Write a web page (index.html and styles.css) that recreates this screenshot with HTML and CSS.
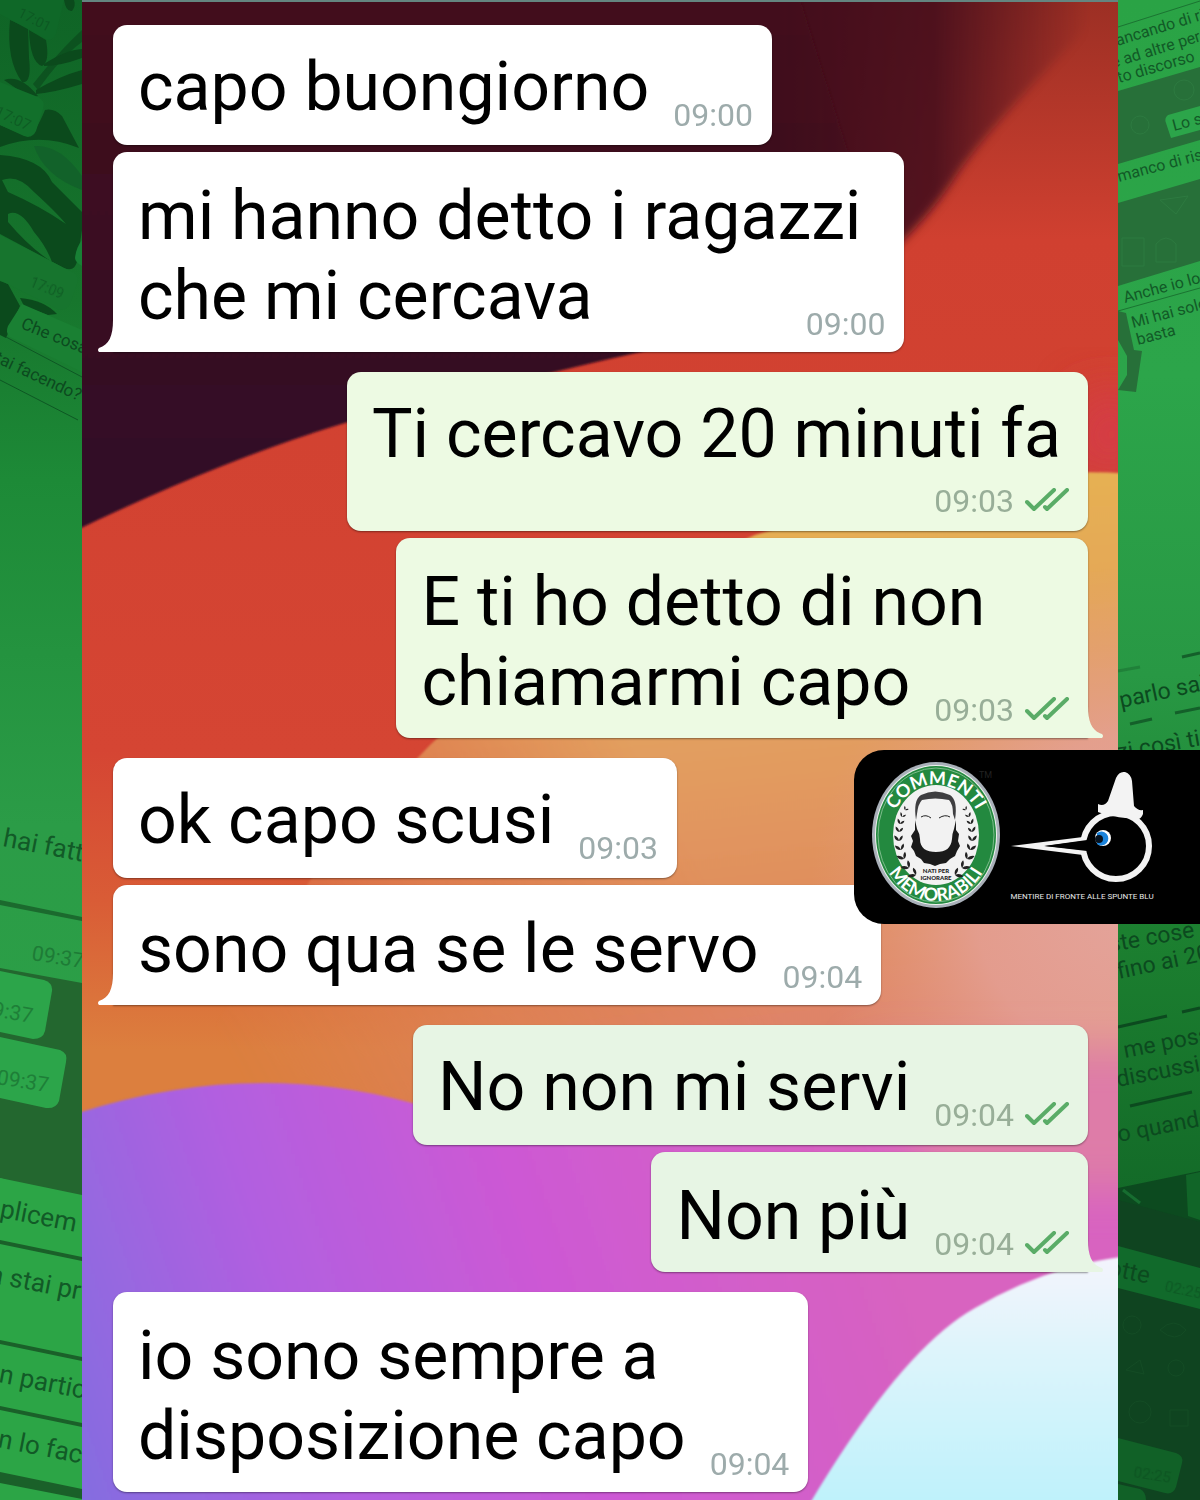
FILE: index.html
```html
<!DOCTYPE html>
<html lang="it">
<head>
  <meta charset="UTF-8">
  <meta name="viewport" content="width=device-width, initial-scale=1.0">
  <title>Commenti Memorabili - capo buongiorno</title>
  <link rel="stylesheet" href="styles.css">
</head>
<body>
  <!-- green collage of old chats -->
  <svg class="collage" viewBox="0 0 1200 1500" preserveAspectRatio="xMidYMin slice" aria-hidden="true">
    <defs>
      <linearGradient id="leftGreen" x1="0" y1="0" x2="0" y2="1">
        <stop offset="0" stop-color="#0f6426"/>
        <stop offset=".2" stop-color="#17762d"/>
        <stop offset=".32" stop-color="#1d8a37"/>
        <stop offset=".55" stop-color="#2b9c47"/>
        <stop offset="1" stop-color="#2ca546"/>
      </linearGradient>
      <linearGradient id="rightGreen" x1="0" y1="0" x2="0" y2="1">
        <stop offset="0" stop-color="#2aa345"/>
        <stop offset=".25" stop-color="#2ca54a"/>
        <stop offset=".45" stop-color="#289844"/>
        <stop offset=".62" stop-color="#1c8030"/>
        <stop offset=".8" stop-color="#136a28"/>
        <stop offset="1" stop-color="#0f5c24"/>
      </linearGradient>
    </defs>
    <rect width="600" height="1500" fill="url(#leftGreen)"/>
    <rect x="600" width="600" height="1500" fill="url(#rightGreen)"/>

    <!-- leaves -->
    <g fill="#0b4a1c">
      <path d="M10 20 Q6 60 22 82 Q32 84 29 58 L28 28Z"/>
      <path d="M29 30 Q30 62 42 66 Q50 62 46 40Z"/>
      <path d="M64 0 Q66 12 72 11 Q76 6 74 0Z"/>
      <path d="M33 84 Q60 50 82 30 V42 Q60 58 38 90Z" opacity=".7"/>
      <path d="M44 64 Q66 50 82 49 V58 Q60 66 44 66Z"/>
      <path d="M36 90 Q60 76 82 70 V84 Q56 92 36 94Z"/>
      <path d="M4 80 Q20 74 38 96 L30 98Z"/>
      <path d="M0 125 L28 137 Q36 132 45 110 Q54 108 62 116 L79 148 Q40 132 0 147Z"/>
      <path fill-rule="evenodd" d="M0 155 Q42 158 52 182 L82 212 V230 L78 256 Q76 276 60 266 L0 234Z M2 180 Q18 174 34 192 Q56 212 66 224 Q40 206 8 192Z M8 214 Q20 208 34 232 Q46 246 52 262 Q30 248 8 222Z"/>
      <path d="M0 281 L8 284 L20 306 L6 338 L0 335Z"/>
      <path d="M20 298 Q44 300 57 314 L48 315 L24 306Z"/>
    </g>
    <path d="M34 146 Q60 144 82 176 V190 Q44 176 34 146Z" fill="#12622a"/>

    <!-- left bubbles -->
    <path d="M0 14 L46 39 Q52 42 56 34 L64 0 H0Z" fill="#0f6828"/>
    <path d="M0 82 L38 97 Q46 101 43 109 L36 131 Q32 139 24 136 L0 125Z" fill="#12702b"/>
    <path d="M0 235 L72 272 Q80 276 77 284 L70 304 Q66 312 57 309 L0 280Z" fill="#17752e"/>
    <path d="M82 240 Q76 248 75 258 Q75 262 82 266Z" fill="#188035"/>
    <path d="M22 304 L82 330 V372 L10 337 Q5 333 8 326Z" fill="#1a8033"/>
    <path d="M6 337 L82 377 M0 380 L78 420" stroke="#0e5724" stroke-width="1" fill="none"/>
    <g class="collage-text deep faded">
      <text transform="translate(17 16) rotate(27)" font-size="14">17:01</text>
      <text transform="translate(-6 115) rotate(25)" font-size="15">17:07</text>
      <text transform="translate(29 286) rotate(22)" font-size="14">17:09</text>
    </g>
    <g class="collage-text deep">
      <text transform="translate(20 328) rotate(22)" font-size="17">Che cosa</text>
      <text transform="translate(-14 358) rotate(25)" font-size="17">stai facendo?</text>
    </g>
    <path d="M0 968 L82 983 V1203 L0 1178Z" fill="#23672f"/>
    <path d="M0 900 L82 917 V921 L0 905Z" fill="#1b6a2e"/>
    <path d="M0 971 L44 980 Q53 983 52 991 L45 1031 Q43 1039 33 1039 L0 1032Z" fill="#2ca54a"/>
    <path d="M0 1037 L60 1050 Q68 1053 66 1062 L59 1101 Q56 1109 46 1108 L0 1098Z" fill="#2ca54a"/>
    <path d="M0 1178 L82 1195 V1500 H0Z" fill="#2ca546"/>
    <g fill="#1a6029">
      <path d="M0 1240 L82 1257 V1261 L0 1244Z"/>
      <path d="M0 1340 L82 1357 V1361 L0 1344Z"/>
      <path d="M0 1406 L82 1423 V1427 L0 1410Z"/>
      <path d="M0 1472 L82 1489 V1499 L0 1483Z"/>
    </g>
    <g class="collage-text">
      <text transform="translate(2 846) rotate(11)" font-size="26">hai fatto</text>
      <text transform="translate(-1 1217) rotate(11)" font-size="26">plicem</text>
      <text transform="translate(-12 1282) rotate(11)" font-size="26">a stai pr</text>
      <text transform="translate(-2 1382) rotate(11)" font-size="26">n partic</text>
      <text transform="translate(-3 1447) rotate(11)" font-size="26">n lo fac</text>
    </g>
    <g class="collage-text faded">
      <text transform="translate(31 960) rotate(9)" font-size="21">09:37</text>
      <text transform="translate(-20 1014) rotate(10)" font-size="21">09:37</text>
      <text transform="translate(-4 1084) rotate(9)" font-size="21">09:37</text>
    </g>

    <!-- right bubbles -->
    <g fill="#277039">
      <path d="M1118 91 L1200 67 V140 L1118 164Z"/>
      <path d="M1118 203 L1200 179 V261 L1118 286Z"/>
      <path d="M1118 311 L1126 313 L1134 350 L1142 351 L1136 392 L1118 390 L1127 375 V356 L1118 340Z"/>
    </g>
    <path d="M1118 27 L1200 1 M1118 311 L1200 288" stroke="#1b7432" fill="none"/>
    <path d="M1200 106 L1168 115 Q1164 118 1166 123 L1171 138 L1200 130Z" fill="#2ca54a"/>
    <g fill="none" stroke="#2d7a40" stroke-width="1">
      <circle cx="1184" cy="90" r="10"/><circle cx="1140" cy="125" r="9"/>
      <path d="M1122 238 h22 v28 h-22zM1156 262 v-18 q10 -12 20 0 v18zM1160 200 l16 14 l12 -18z"/>
    </g>
    <g class="collage-text">
      <text transform="translate(1104 50) rotate(-17)" font-size="16">mancando di ris</text>
      <text transform="translate(1113 68) rotate(-17)" font-size="16">e ad altre pers</text>
      <text transform="translate(1119 83) rotate(-16)" font-size="16">to discorso</text>
      <text transform="translate(1174 131) rotate(-15)" font-size="16">Lo s</text>
      <text transform="translate(1119 182) rotate(-15)" font-size="16">manco di risp</text>
      <text transform="translate(1125 303) rotate(-15)" font-size="16">Anche io lo s</text>
      <text transform="translate(1133 328) rotate(-15)" font-size="16">Mi hai solo</text>
      <text transform="translate(1138 345) rotate(-15)" font-size="16">basta</text>
    </g>
    <g stroke="#14602a" stroke-width="3" fill="none">
      <path d="M1118 671 L1140 667" opacity=".4"/>
      <path d="M1182 657 L1200 653 M1130 724 L1152 719 M1175 713 L1200 708"/>
      <path d="M1118 1027 L1167 1016 M1182 1012 L1200 1008 M1130 1106 L1192 1092" stroke="#0c4a1f"/>
    </g>
    <path d="M1118 1188 L1200 1171 V1500 H1118Z" fill="#0c4a1f"/>
    <path d="M1118 1200 L1200 1222 V1500 H1118Z" fill="#0f4420"/>
    <path d="M1186 1175 L1200 1172 V1220 L1188 1216Z" fill="#116528"/>
    <path d="M1123 1190 L1140 1203" stroke="#176d30" stroke-width="3"/>
    <path d="M1118 1246 L1200 1268 V1309 L1118 1288Z" fill="#116a2b"/>
    <path d="M1118 1438 L1176 1453 Q1184 1456 1182 1463 L1176 1487 Q1173 1495 1165 1493 L1118 1481Z" fill="#116127"/>
    <path d="M1118 1484 L1140 1489 Q1146 1492 1146 1500 H1118Z" fill="#116127"/>
    <g fill="none" stroke="#144c25" stroke-width="1">
      <circle cx="1132" cy="1325" r="9"/><circle cx="1176" cy="1368" r="8"/>
      <path d="M1160 1330 q14 -14 26 0 q-10 14 -26 0M1126 1370 l14 -10 l4 14z"/>
      <circle cx="1140" cy="1412" r="11"/><path d="M1170 1410 h18 v16 h-18z"/>
    </g>
    <g class="collage-text deep">
      <text transform="translate(1121 708) rotate(-12)" font-size="23">parlo sai</text>
      <text transform="translate(1118 760) rotate(-10)" font-size="23">zi così tir</text>
      <text transform="translate(1110 952) rotate(-10)" font-size="23">ste cose</text>
      <text transform="translate(1119 979) rotate(-12)" font-size="23">fino ai 20</text>
      <text transform="translate(1125 1058) rotate(-11)" font-size="23">me poss</text>
      <text transform="translate(1118 1087) rotate(-11)" font-size="23">discussi</text>
      <text transform="translate(1119 1142) rotate(-11)" font-size="23">o quando</text>
      <text transform="translate(1107 1275) rotate(12)" font-size="24">otte</text>
    </g>
    <g class="collage-text deep faded">
      <text transform="translate(1164 1291) rotate(12)" font-size="15">02:25</text>
      <text transform="translate(1133 1477) rotate(9)" font-size="15">02:25</text>
    </g>
  </svg>

  <main class="phone">
    <!-- phone wallpaper -->
    <svg class="wallpaper" viewBox="82 2 1036 1498" preserveAspectRatio="none" aria-hidden="true">
      <defs>
        <linearGradient id="red" x1="0" y1="0" x2="0" y2="1">
          <stop offset="0" stop-color="#9c2f24"/>
          <stop offset=".16" stop-color="#d04030"/>
          <stop offset=".5" stop-color="#d54533"/>
          <stop offset=".6" stop-color="#d95c36"/>
          <stop offset=".7" stop-color="#dc7f3e"/>
        </linearGradient>
        <linearGradient id="dark" x1="0" y1="0" x2="0" y2="1">
          <stop offset="0" stop-color="#43101c"/>
          <stop offset=".6" stop-color="#380b23"/>
          <stop offset="1" stop-color="#300829"/>
        </linearGradient>
        <linearGradient id="fadeRight" gradientUnits="userSpaceOnUse" x1="780" y1="0" x2="1090" y2="0">
          <stop offset="0" stop-color="#fff"/>
          <stop offset=".5" stop-color="#ddd"/>
          <stop offset="1" stop-color="#000"/>
        </linearGradient>
        <mask id="darkMask" maskUnits="userSpaceOnUse" x="0" y="-60" width="1200" height="660">
          <rect x="0" y="-60" width="1200" height="660" fill="url(#fadeRight)"/>
        </mask>
        <linearGradient id="orange" gradientUnits="userSpaceOnUse" x1="900" y1="500" x2="960" y2="1060">
          <stop offset="0" stop-color="#e6b052"/>
          <stop offset=".4" stop-color="#e29e60"/>
          <stop offset=".75" stop-color="#e08a5c"/>
          <stop offset="1" stop-color="#de8070"/>
        </linearGradient>
        <linearGradient id="fadeLeft" gradientUnits="userSpaceOnUse" x1="200" y1="1000" x2="640" y2="760">
          <stop offset="0" stop-color="#000"/>
          <stop offset=".5" stop-color="#999"/>
          <stop offset="1" stop-color="#fff"/>
        </linearGradient>
        <mask id="orangeMask" maskUnits="userSpaceOnUse" x="0" y="400" width="1200" height="900">
          <rect x="0" y="400" width="1200" height="900" fill="url(#fadeLeft)"/>
        </mask>
        <radialGradient id="blush" gradientUnits="userSpaceOnUse" cx="1140" cy="900" r="330">
          <stop offset="0" stop-color="#e4a49c"/>
          <stop offset=".5" stop-color="#e4a095" stop-opacity=".85"/>
          <stop offset="1" stop-color="#e39b7c" stop-opacity="0"/>
        </radialGradient>
        <linearGradient id="purple" gradientUnits="userSpaceOnUse" x1="60" y1="1420" x2="860" y2="1150">
          <stop offset="0" stop-color="#856de0"/>
          <stop offset=".3" stop-color="#b25fe0"/>
          <stop offset=".6" stop-color="#cd59d4"/>
          <stop offset="1" stop-color="#d863c0"/>
        </linearGradient>
        <linearGradient id="ice" x1="0" y1="0" x2="0" y2="1">
          <stop offset="0" stop-color="#f4f4fd"/>
          <stop offset=".4" stop-color="#dcf4fb"/>
          <stop offset="1" stop-color="#bdf2fb"/>
        </linearGradient>
        <filter id="soft"><feGaussianBlur stdDeviation="1"/></filter>
        <filter id="medium"><feGaussianBlur stdDeviation="5"/></filter>
        <filter id="softer" x="-50%" y="-50%" width="200%" height="200%"><feGaussianBlur stdDeviation="20"/></filter>
      </defs>
      <rect x="82" y="0" width="1036" height="1500" fill="url(#red)"/>
      <g mask="url(#darkMask)">
        <path d="M700 -40 H1160 Q1010 100 960 170 Q925 225 880 260 L700 300Z" fill="#43101d" filter="url(#medium)"/>
        <path d="M60 0 H800 L880 255 Q780 316 640 352 Q560 370 348 422 Q220 460 60 538Z" fill="url(#dark)" filter="url(#soft)"/>
      </g>
      <path d="M1080 390 H1150 V475 H1060Z" fill="#d43d45" filter="url(#softer)"/>
      <g mask="url(#orangeMask)">
        <path d="M1130 474 Q1000 462 755 535 Q560 620 430 745 L330 850 L100 1200 H1130Z" fill="url(#orange)" filter="url(#soft)"/>
      </g>
      <rect x="780" y="560" width="338" height="680" fill="url(#blush)"/>
      <path d="M60 1119 Q240 1056 412 1103 Q560 1140 700 1110 L900 1080 L1150 1130 V1520 H60Z" fill="url(#purple)" filter="url(#soft)"/>
      <path d="M860 1050 H1180 V1190 H940Z" fill="#de7ca8" filter="url(#softer)"/>
      <path d="M806 1510 Q900 1350 975 1308 Q1050 1264 1130 1256 V1510Z" fill="url(#ice)" filter="url(#soft)"/>
    </svg>

    <svg class="defs" aria-hidden="true">
      <symbol id="ticks" viewBox="0 0 46 26">
        <path d="M2 14 L9 21 L29 2 M20 19 L22 21 L42 2" fill="none" stroke="#5aac67" stroke-width="4" stroke-linecap="round" stroke-linejoin="round"/>
      </symbol>
    </svg>

    <ul class="chat">
      <li class="bubble in">capo buongiorno <span class="meta"><time>09:00</time></span></li>
      <li class="bubble in tail roomy">mi hanno detto i ragazzi<br>che mi cercava <span class="meta"><time>09:00</time></span></li>
      <li class="bubble out first">Ti cercavo 20 minuti fa<br><span class="meta below"><time>09:03</time><svg class="ticks" role="img" aria-label="letto"><use href="#ticks"/></svg></span></li>
      <li class="bubble out tail">E ti ho detto di non<br>chiamarmi capo <span class="meta"><time>09:03</time><svg class="ticks" role="img" aria-label="letto"><use href="#ticks"/></svg></span></li>
      <li class="bubble in first">ok capo scusi <span class="meta"><time>09:03</time></span></li>
      <li class="bubble in tail">sono qua se le servo <span class="meta"><time>09:04</time></span></li>
      <li class="bubble out late first">No non mi servi <span class="meta"><time>09:04</time><svg class="ticks" role="img" aria-label="letto"><use href="#ticks"/></svg></span></li>
      <li class="bubble out late tail">Non più <span class="meta"><time>09:04</time><svg class="ticks" role="img" aria-label="letto"><use href="#ticks"/></svg></span></li>
      <li class="bubble in first">io sono sempre a<br>disposizione capo <span class="meta"><time>09:04</time></span></li>
    </ul>
  </main>

  <!-- page logos -->
  <aside class="badge">
    <svg viewBox="0 0 346 174" role="img" aria-label="Commenti Memorabili, Mentire di fronte alle spunte blu">
      <defs>
        <path id="arcTop" d="M41 112 A47 52 0 1 1 123 112"/>
        <path id="arcBottom" d="M25 85 A57 66 0 0 0 139 85"/>
        <path id="leaf" d="M0 0 Q-5 -1 -5 -7 Q0 -5 0 0 Q1 -5 5 -6 Q5 -1 0 0Z"/>
        <g id="laurel" fill="#222">
          <use href="#leaf" transform="translate(62 125) rotate(-62)"/>
          <use href="#leaf" transform="translate(55 118) rotate(-48)"/>
          <use href="#leaf" transform="translate(50 109) rotate(-32) scale(.95)"/>
          <use href="#leaf" transform="translate(47 100) rotate(-18) scale(.9)"/>
          <use href="#leaf" transform="translate(45 91) rotate(-6) scale(.85)"/>
          <use href="#leaf" transform="translate(45 82) rotate(4) scale(.75)"/>
          <use href="#leaf" transform="translate(46 74) rotate(14) scale(.7)"/>
          <use href="#leaf" transform="translate(48 67) rotate(22) scale(.6)"/>
          <use href="#leaf" transform="translate(51 60) rotate(34) scale(.5)"/>
        </g>
      </defs>
      <ellipse cx="82" cy="85" rx="64" ry="73" fill="#a9b0b9"/>
      <ellipse cx="82" cy="85" rx="61" ry="70" fill="#eef3ef"/>
      <ellipse cx="82" cy="85" rx="60" ry="69" fill="#23893f"/>
      <ellipse cx="82" cy="85" rx="58" ry="67" fill="none" stroke="#7dbd8c" stroke-width="1"/>
      <ellipse cx="82" cy="85" rx="43" ry="50" fill="#f2f2f2"/>
      <text class="ring-text"><textPath href="#arcTop" startOffset="50%">COMMENTI</textPath></text>
      <text class="ring-text"><textPath href="#arcBottom" startOffset="50%">MEMORABILI</textPath></text>
      <use href="#laurel"/>
      <use href="#laurel" transform="translate(163 0) scale(-1 1)"/>
      <!-- hair -->
      <path d="M62 70 Q59 50 67 45 Q81 38 96 45 Q104 50 101 70 L99 64 Q99 54 95 50 Q81 47 68 50 Q64 54 63 64Z" fill="#3e3e40"/>
      <path d="M67 67 Q72 64 77 68 M85 68 Q91 64 96 67" fill="none" stroke="#222" stroke-width="1"/>
      <!-- beard -->
      <path d="M61 70 L63 79 Q66 84 66 89 C66 98 72 102 82 102 C92 102 97 98 98 89 Q98 84 100 79 L102 70 V80 L105 84 L104 91 L106 96 L103 101 L101 106 L96 109 L92 113 L86 114 L81 116 L76 114 L70 113 L67 109 L62 106 L60 101 L57 97 L59 91 L57 86 L61 80Z" fill="#1a1a1a"/>
      <text class="motto" x="82" y="123">NATI PER</text>
      <text class="motto" x="82" y="130">IGNORARE</text>
      <text class="tm" x="125" y="28">TM</text>

      <!-- bird with hat -->
      <path d="M157 96 L229 87 L230 91 L191 96 L230 100 L229 105Z" fill="#f3f3f3"/>
      <circle cx="262" cy="96" r="33" fill="#000" stroke="#f3f3f3" stroke-width="6"/>
      <path d="M190 96 L233 90 V101Z" fill="#000"/>
      <path d="M244 62 L244 54 Q250 57 254 51 L262 28 Q265 21 271 22 Q277 24 278 31 L280 56 Q284 61 289 60 L289 64 Q287 69 284 69 Q262 68 252 64 Q246 63 244 62Z" fill="#f3f3f3"/>
      <circle cx="249" cy="88" r="8" fill="#fff"/>
      <path d="M243 83 A7 7 0 1 1 243 94Z" fill="#1b84dc"/>
      <circle cx="245" cy="89" r="4" fill="#06121e"/>
      <text class="slogan" x="228" y="149">MENTIRE DI FRONTE ALLE SPUNTE BLU</text>
    </svg>
  </aside>
</body>
</html>
```

FILE: styles.css
```css
* {
  box-sizing: border-box;
}

body {
  position: relative;
  margin: 0;
  padding: 0 82px;
  min-height: 100vh;
  overflow-x: hidden;
  background-color: #1d8a37;
  font-family: Roboto, "Liberation Sans", sans-serif;
}

.collage {
  position: absolute;
  top: 0;
  left: 0;
  width: 100%;
  height: 100%;
}

.collage-text {
  fill: #125a27;
}

.collage-text.deep {
  fill: #0c4a1f;
}

.collage-text.faded {
  opacity: 0.5;
}

.phone {
  position: relative;
  min-height: 100vh;
  border-top: 2px solid #648580;
}

.wallpaper {
  position: absolute;
  top: 0;
  left: 0;
  width: 100%;
  height: 100%;
}

.defs {
  position: absolute;
  width: 0;
  height: 0;
}

.chat {
  position: relative;
  display: flex;
  flex-direction: column;
  gap: 7px;
  margin: 0;
  padding: 23px 30px 6px 31px;
  list-style: none;
}

.bubble {
  position: relative;
  padding: 22px 27px 11px 25px;
  border-radius: 14px;
  box-shadow: 0 1px 2px rgba(0, 0, 0, 0.4);
  color: #000;
  font-size: 68px;
  line-height: 80px;
}

.in {
  align-self: flex-start;
  background-color: #fff;
}

.out {
  align-self: flex-end;
  background-color: #edfae3;
}

.late {
  background-color: #e7f5e4;
}

.first {
  margin-top: 13px;
}

.tail,
.bubble:last-child {
  padding-top: 24px;
  padding-bottom: 9px;
}

.roomy {
  padding-right: 43px;
}

.meta {
  float: right;
  display: flex;
  align-items: center;
  gap: 11px;
  margin: 49px -8px 0 24px;
  color: #9dabab;
  font-size: 32px;
  line-height: 38px;
}

.roomy .meta {
  margin-right: -24px;
}

.out .meta {
  margin-right: -10px;
  color: #98ae98;
}

.bubble .below {
  margin-top: 8px;
}

.ticks {
  width: 46px;
  height: 26px;
}

/* bubble tails */
.tail::after {
  content: "";
  position: absolute;
  bottom: 0;
  width: 16px;
  height: 32px;
  background-color: inherit;
}

.in.tail {
  border-bottom-left-radius: 0;
}

.in.tail::after {
  left: -15px;
  clip-path: path("M16 0 H15 C15 16 11 25 1 28 Q-1 30 1 32 H16 Z");
}

.out.tail {
  border-bottom-right-radius: 0;
}

.out.tail::after {
  right: -15px;
  clip-path: path("M0 0 H1 C1 16 5 25 15 28 Q17 30 15 32 H0 Z");
}

.badge {
  position: absolute;
  top: 750px;
  right: 0;
  width: 346px;
  height: 174px;
  border-radius: 30px 0 0 30px;
  background-color: #000;
}

.badge svg {
  display: block;
  width: 100%;
  height: 100%;
}

.ring-text {
  fill: #fff;
  font-family: Lato, sans-serif;
  font-size: 18px;
  font-weight: bold;
  text-anchor: middle;
}

.motto {
  fill: #222;
  font-family: Lato, sans-serif;
  font-size: 6px;
  font-weight: 900;
  text-anchor: middle;
}

.tm {
  fill: #222;
  font-size: 9px;
}

.slogan {
  fill: #e8e8e8;
  font-size: 8px;
  text-anchor: middle;
}
```
